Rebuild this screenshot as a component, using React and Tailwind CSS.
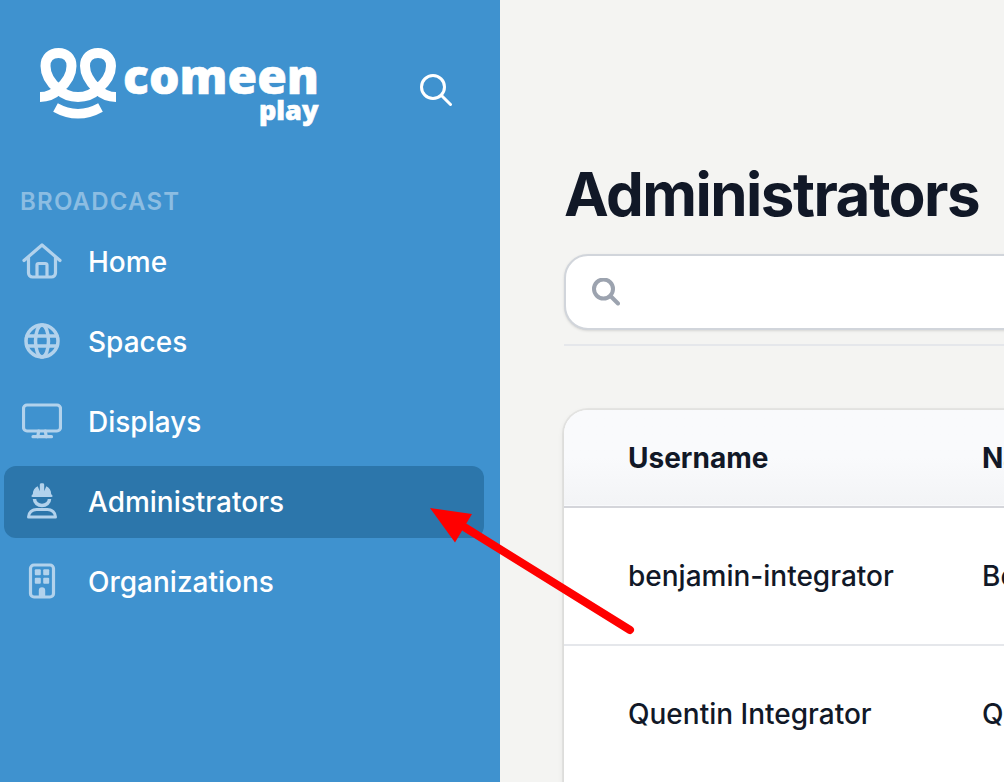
import React from "react";

function Logo() {
  return (
    <svg width="288" height="88" viewBox="36 42 288 88" role="img" aria-label="comeen play" className="block shrink-0">
      <g fill="none" stroke="#fff">
        <path
          strokeWidth="10"
          d="M40 97 C47 97 54 94 59 89 C66 83 71.500 75 71.500 66 C71.500 57.500 66 53 58.500 53 C51 53 45.500 57.500 45.500 66 C45.500 75 51 83 58 89 C63 94 70 97 78 97 C86 97 93 94 98 89 C105 83 111 75 111 66 C111 57.500 105 53 98 53 C90.500 53 85 57.500 85 66 C85 75 91 83 97 89 C102 94 109 97 116 97"
        />
        <path strokeWidth="9.500" d="M55.500 107.500 Q78 120 100.500 107.500" />
      </g>
      <g fill="#fff" stroke="#fff" strokeWidth="0.600" fontFamily="Open Sans, sans-serif" fontWeight="800">
        <text x="123" y="94" fontSize="48">comeen</text>
        <text x="259" y="120" fontSize="27">play</text>
      </g>
    </svg>
  );
}

function NavIcon({ children }) {
  return (
    <svg
      width="40"
      height="40"
      viewBox="0 0 40 40"
      fill="none"
      stroke="currentColor"
      strokeWidth="3.500"
      strokeLinecap="round"
      strokeLinejoin="round"
      aria-hidden="true"
      className="shrink-0 text-[#b2d2ec]"
    >
      {children}
    </svg>
  );
}

const items = [
  {
    label: "Home",
    icon: (
      <>
        <path d="M2 18.500 20 3 38 18.500" strokeWidth="3.200" />
        <path d="M6.500 15.500V31a4 4 0 0 0 4 4h19a4 4 0 0 0 4-4V15.500" strokeWidth="3.200" />
        <path d="M15 34.500V23a1.500 1.500 0 0 1 1.500-1.500h7A1.500 1.500 0 0 1 25 23v11.500" strokeWidth="3.200" />
      </>
    ),
  },
  {
    label: "Spaces",
    icon: (
      <>
        <circle cx="20" cy="19" r="16" />
        <ellipse cx="20" cy="19" rx="6.500" ry="16" />
        <path d="M5 14h30M5 24h30" />
      </>
    ),
  },
  {
    label: "Displays",
    icon: (
      <>
        <rect x="1.500" y="3" width="37" height="26" rx="3.500" strokeWidth="3.200" />
        <path d="m16.700 29-1 6M23.300 29l1 6M11 34.700h18.500" strokeWidth="3.200" />
      </>
    ),
  },
  {
    label: "Administrators",
    active: true,
    icon: (
      <>
        <path
          fill="currentColor"
          stroke="none"
          d="M10.500 15a1 1 0 0 1-1-1.200c.3-.8.900-1.200 1.300-1.500 0-3.700 2-6.700 4.900-8l2.100 5V2.800c0-.9.600-1.500 1.400-1.500h1.600c.8 0 1.400.6 1.400 1.500v6.500l2.100-5c2.900 1.300 4.900 4.300 4.900 8 .4.300 1 .7 1.300 1.500a1 1 0 0 1-1 1.200z"
        />
        <path d="M12.500 17a7.500 6.500 0 0 0 15 0" strokeLinecap="butt" />
        <path d="M6.500 35c0-4.500 3.500-7.500 8-7.500h11c4.500 0 8 3 8 7.500z" strokeWidth="3" />
      </>
    ),
  },
  {
    label: "Organizations",
    icon: (
      <>
        <rect x="8.500" y="3" width="23" height="32" rx="3.500" strokeWidth="3.200" />
        <g fill="currentColor" stroke="none">
          <rect x="12.800" y="7.200" width="6" height="6" rx="1" />
          <rect x="21.200" y="7.200" width="6" height="6" rx="1" />
          <rect x="12.800" y="15.800" width="6" height="6" rx="1" />
          <rect x="21.200" y="15.800" width="6" height="6" rx="1" />
          <path d="M16.800 35v-6.500a3.200 3.200 0 0 1 6.400 0V35z" />
        </g>
      </>
    ),
  },
];

function Sidebar() {
  return (
    <aside className="w-[500px] shrink-0 bg-[#3f92cf] pt-[42px]">
      <div className="flex items-center justify-between pr-12 pl-9">
        <Logo />
        <button type="button" aria-label="Search" className="mt-2 cursor-pointer">
          <svg width="32" height="32" viewBox="0 0 32 32" fill="none" stroke="#fff" strokeWidth="3" strokeLinecap="round">
            <circle cx="13" cy="13" r="11.500" />
            <path d="m21.500 21.500 9 9" />
          </svg>
        </button>
      </div>
      <nav aria-label="Broadcast" className="pt-14">
        <h2 className="px-5 text-[24px] leading-8 font-semibold tracking-wider text-[#8cbde2]">BROADCAST</h2>
        <ul className="mt-2 flex flex-col gap-2 pr-4 pl-1">
          {items.map((item) => (
            <li key={item.label}>
              <a
                href="#"
                aria-current={item.active ? "page" : undefined}
                className={
                  item.active
                    ? "flex h-[72px] items-center gap-[26px] rounded-xl bg-[#2c76ab] px-[18px] text-[28px] font-medium text-white"
                    : "flex h-[72px] items-center gap-[26px] rounded-xl px-[18px] text-[28px] font-medium text-white"
                }
              >
                <NavIcon>{item.icon}</NavIcon>
                {item.label}
              </a>
            </li>
          ))}
        </ul>
      </nav>
    </aside>
  );
}

const rows = [
  ["benjamin-integrator", "Benjamin"],
  ["Quentin Integrator", "Quentin"],
];

function AdministratorsPage() {
  return (
    <main className="min-w-0 flex-1 overflow-hidden pt-[158px] pl-16">
      <div className="min-w-[880px]">
        <h1 className="text-[60px] leading-[72px] font-bold tracking-tight">Administrators</h1>
        <label className="mt-6 flex h-[76px] items-center gap-4 rounded-3xl border-2 border-[#d1d5db] bg-white px-[26px] shadow-sm">
          <svg width="28" height="28" viewBox="0 0 28 28" fill="none" stroke="#9ca3af" strokeWidth="4" strokeLinecap="round" aria-hidden="true" className="shrink-0">
            <circle cx="11.500" cy="11" r="9.500" />
            <path d="m18.500 18 7.500 7.500" />
          </svg>
          <span className="sr-only">Search administrators</span>
          <input type="search" className="min-w-0 flex-1 bg-transparent text-[28px] outline-none" />
        </label>
        <hr className="mt-[14px] border-t-2 border-[#e5e7eb]" />
        <div className="mt-16 overflow-hidden rounded-t-3xl bg-white shadow-[0_0_0_2px_rgba(0,0,0,0.05),0_2px_6px_rgba(0,0,0,0.1)]">
          <table className="w-full table-fixed border-collapse text-left text-[28px] leading-10">
            <thead>
              <tr className="h-[97px] border-b-2 border-[#d4d5da] bg-linear-to-b from-[#f9fafc] from-50% to-[#f3f4f6]">
                <th scope="col" className="w-[354px] pl-16 font-bold">Username</th>
                <th scope="col" className="pl-16 font-bold">Name</th>
              </tr>
            </thead>
            <tbody>
              {rows.map(([username, name]) => (
                <tr key={username} className="h-[138px] border-b-2 border-[#e5e7eb] font-medium">
                  <td className="pl-16">{username}</td>
                  <td className="pl-16">{name}</td>
                </tr>
              ))}
            </tbody>
          </table>
        </div>
      </div>
    </main>
  );
}

export default function App() {
  return (
    <div className="relative flex h-screen overflow-hidden bg-[#f4f4f2] font-[Inter,sans-serif] text-[#111827]">
      <Sidebar />
      <AdministratorsPage />
      <svg width="206" height="128" viewBox="0 0 206 128" aria-hidden="true" className="pointer-events-none absolute top-[507px] left-[430px]">
        <path d="m35 20.500 165 102.500" stroke="#f00" strokeWidth="8" strokeLinecap="round" />
        <path d="M0 1 42 7 25 35.500Z" fill="#f00" />
      </svg>
    </div>
  );
}
